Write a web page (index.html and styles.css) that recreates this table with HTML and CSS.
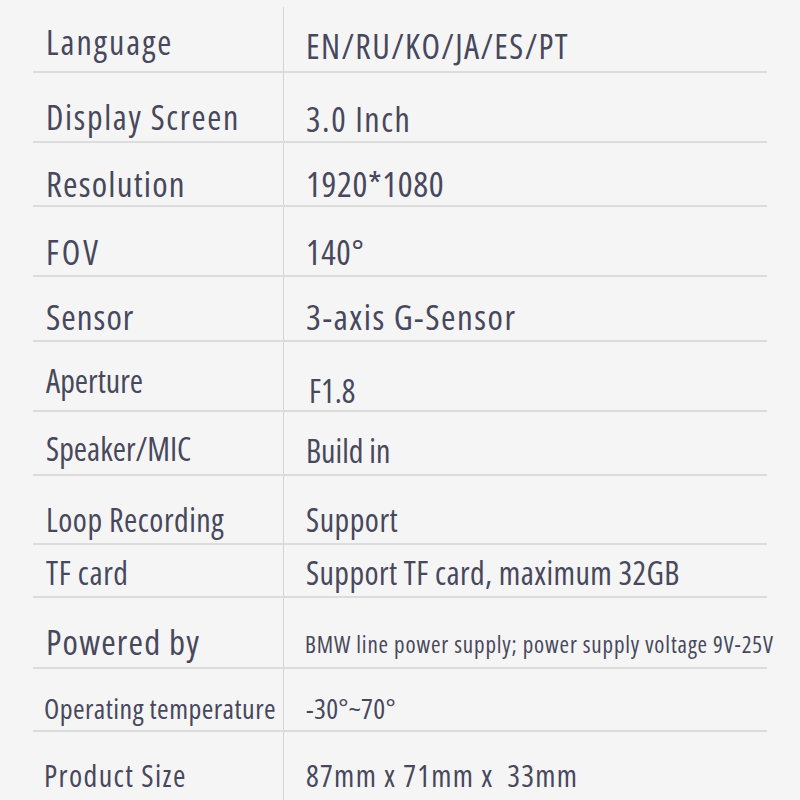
FILE: index.html
```html
<!DOCTYPE html>
<html lang="en">
<head>
<meta charset="utf-8">
<title>Specifications</title>
<link rel="stylesheet" href="styles.css">
</head>
<body>
<div class="spec">
  <div class="row r1"><div class="k">Language</div><div class="v">EN/RU/KO/JA/ES/PT</div></div>
  <div class="row r2"><div class="k">Display Screen</div><div class="v">3.0 Inch</div></div>
  <div class="row r3"><div class="k">Resolution</div><div class="v">1920*1080</div></div>
  <div class="row r4"><div class="k">FOV</div><div class="v">140°</div></div>
  <div class="row r5"><div class="k">Sensor</div><div class="v">3-axis G-Sensor</div></div>
  <div class="row r6"><div class="k">Aperture</div><div class="v">F1.8</div></div>
  <div class="row r7"><div class="k">Speaker/MIC</div><div class="v">Build in</div></div>
  <div class="row r8"><div class="k">Loop Recording</div><div class="v">Support</div></div>
  <div class="row r9"><div class="k">TF card</div><div class="v">Support TF card, maximum 32GB</div></div>
  <div class="row r10"><div class="k">Powered by</div><div class="v">BMW line power supply; power supply voltage 9V-25V</div></div>
  <div class="row r11"><div class="k">Operating temperature</div><div class="v">-30°~70°</div></div>
  <div class="row r12"><div class="k">Product Size</div><div class="v">87mm x 71mm x&nbsp; 33mm</div></div>
</div>
</body>
</html>
```

FILE: styles.css
```css
html, body {
  margin: 0;
  padding: 0;
  background: #f5f5f5;
}
body {
  font-family: "Open Sans", "Noto Sans", sans-serif;
  font-stretch: 75%;
  color: #48485c;
  overflow: hidden;
  height: 800px;
}
.spec {
  margin-left: 33px;
  width: 734px;
  padding-top: 7px;
}
.row {
  display: grid;
  grid-template-columns: 251px 1fr;
  box-sizing: border-box;
  border-bottom: 2px solid #dcdcdc;
}
.k, .v {
  display: flex;
  align-items: flex-end;
  line-height: 1;
  white-space: nowrap;
}
.k {
  padding-left: 13px;
  border-right: 1px solid #d4d4d4;
}
.v {
  padding-left: 22px;
}

.r1 { height: 66px; }
.r1 .k, .r1 .v { font-size: 34px; }
.r1 .k { padding-bottom: 12px; letter-spacing: 2px; }
.r1 .v { padding-bottom: 8px; letter-spacing: 1.4px; }

.r2 { height: 70px; }
.r2 .k, .r2 .v { font-size: 34px; }
.r2 .k { padding-bottom: 7px; letter-spacing: 1.7px; }
.r2 .v { padding-bottom: 5px; letter-spacing: 1.6px; }

.r3 { height: 64px; }
.r3 .k, .r3 .v { font-size: 35px; padding-bottom: 4px; }
.r3 .k { letter-spacing: 1.2px; }
.r3 .v { letter-spacing: 0.6px; }

.r4 { height: 70px; }
.r4 .k, .r4 .v { font-size: 34px; padding-bottom: 6px; }
.r4 .k { letter-spacing: 3px; }
.r4 .v { letter-spacing: 0.7px; }

.r5 { height: 65px; }
.r5 .k, .r5 .v { font-size: 35px; padding-bottom: 6px; }
.r5 .k { letter-spacing: 1px; }
.r5 .v { letter-spacing: 1.5px; }

.r6 { height: 70px; }
.r6 .k, .r6 .v { font-size: 32px; }
.r6 .k { padding-bottom: 13px; }
.r6 .v { padding-bottom: 3px; padding-left: 25px; }

.r7 { height: 64px; }
.r7 .k, .r7 .v { font-size: 32px; }
.r7 .k { padding-bottom: 9px; }
.r7 .v { padding-bottom: 7px; }

.r8 { height: 69px; }
.r8 .k, .r8 .v { font-size: 32px; padding-bottom: 7px; letter-spacing: 0.5px; }

.r9 { height: 53px; }
.r9 .k, .r9 .v { font-size: 32px; padding-bottom: 7px; }
.r9 .k { letter-spacing: 0.6px; }
.r9 .v { letter-spacing: 0.4px; }

.r10 { height: 71px; }
.r10 .k { font-size: 35px; padding-bottom: 8px; letter-spacing: 1.2px; }
.r10 .v { font-size: 23px; padding-bottom: 11px; padding-left: 21px; letter-spacing: 0.85px; }

.r11 { height: 63px; }
.r11 .k, .r11 .v { font-size: 28px; padding-bottom: 8px; }
.r11 .k { padding-left: 11px; letter-spacing: 0.45px; }
.r11 .v { letter-spacing: 0.3px; }

.r12 { height: 70px; border-bottom: none; }
.r12 .k, .r12 .v { font-size: 30px; padding-bottom: 11px; }
.r12 .k { padding-left: 11px; letter-spacing: 1.4px; }
.r12 .v { letter-spacing: 1.3px; }
```
